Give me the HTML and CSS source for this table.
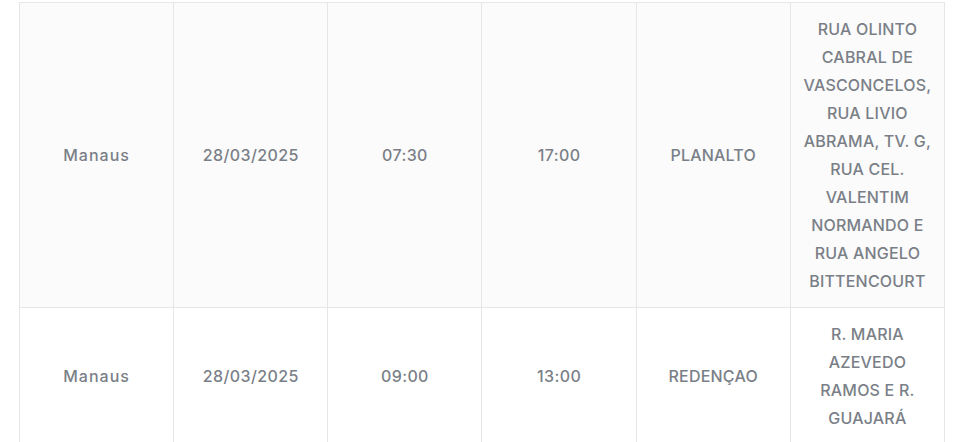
FILE: index.html
```html
<!DOCTYPE html>
<html lang="pt-BR">
<head>
<meta charset="utf-8">
<title>Cronograma</title>
<link rel="stylesheet" href="styles.css">
</head>
<body>
<table class="schedule">
  <colgroup>
    <col class="c"><col class="c"><col class="c"><col class="c"><col class="c"><col class="c">
  </colgroup>
  <tbody>
    <tr class="odd">
      <td class="lc">Manaus</td>
      <td>28/03/2025</td>
      <td>07:30</td>
      <td>17:00</td>
      <td class="up">PLANALTO</td>
      <td class="up">RUA OLINTO CABRAL DE VASCONCELOS, RUA LIVIO ABRAMA, TV. G, RUA CEL. VALENTIM NORMANDO E RUA ANGELO BITTENCOURT</td>
    </tr>
    <tr class="even">
      <td class="lc">Manaus</td>
      <td>28/03/2025</td>
      <td>09:00</td>
      <td>13:00</td>
      <td class="up">REDENÇAO</td>
      <td class="up">R. MARIA AZEVEDO RAMOS E R. GUAJARÁ</td>
    </tr>
  </tbody>
</table>
</body>
</html>
```
FILE: styles.css
```css
html, body {
  margin: 0;
  background: #ffffff;
}
body {
  padding: 2px 18px 0 19px;
  font-family: "Inter", "Open Sans", sans-serif;
}
.schedule {
  width: 926px;
  table-layout: fixed;
  border-collapse: collapse;
}
.schedule .c {
  width: 154px;
}
.schedule td {
  border: 1px solid #e6e6e6;
  padding: 12px 10px;
  text-align: center;
  vertical-align: middle;
  font-size: 16px;
  line-height: 28px;
  font-weight: 500;
  letter-spacing: 0.4px;
  color: #7a7f87;
}
.schedule td.up {
  letter-spacing: 0.2px;
}
.schedule td.lc {
  letter-spacing: 1px;
}
.schedule .odd td {
  background: #fbfbfb;
}
.schedule .even td {
  background: #ffffff;
}
```
